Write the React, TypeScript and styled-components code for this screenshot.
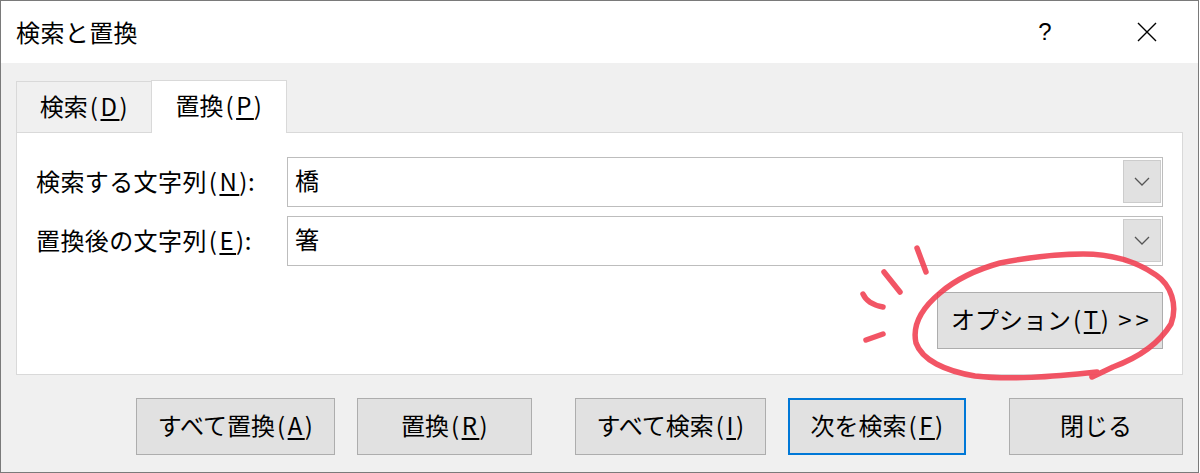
import styled, { createGlobalStyle } from "styled-components";

const GlobalStyle = createGlobalStyle`
  body {
    margin: 0;
    background: #ffffff;
    font-family: "Noto Sans CJK JP", "Noto Sans", sans-serif;
    color: #000;
  }
`;

const Window = styled.div`
  position: relative;
  box-sizing: border-box;
  width: 1199px;
  height: 473px;
  border: 1px solid #7a7a7a;
  display: flex;
  flex-direction: column;
  background: #f0f0f0;
`;

const TitleBar = styled.div`
  height: 62px;
  background: #ffffff;
  display: flex;
  align-items: center;
  padding-left: 15px;
  font-size: 24px;
  line-height: 1;
`;

const TitleText = styled.span`
  flex: 1;
  letter-spacing: 0.4px;
`;

const TitleButton = styled.div`
  width: 102px;
  height: 62px;
  display: flex;
  align-items: center;
  justify-content: center;
  font-family: "Liberation Sans", sans-serif;
  font-size: 24px;
`;

const Body = styled.div`
  flex: 1;
  padding: 17px 15px 0 15px;
`;

const TabStrip = styled.div`
  display: flex;
  align-items: flex-end;
  height: 52px;
`;

const Tab = styled.div<{ $active?: boolean }>`
  box-sizing: border-box;
  width: ${(p) => (p.$active ? 136 : 135)}px;
  height: ${(p) => (p.$active ? 53 : 51)}px;
  margin-bottom: ${(p) => (p.$active ? -1 : 0)}px;
  position: relative;
  z-index: ${(p) => (p.$active ? 2 : 1)};
  background: ${(p) => (p.$active ? "#ffffff" : "#f0f0f0")};
  border: 1px solid #d9d9d9;
  border-bottom: none;
  border-right: ${(p) => (p.$active ? "1px solid #d9d9d9" : "none")};
  display: flex;
  align-items: center;
  justify-content: center;
  padding-bottom: ${(p) => (p.$active ? 4 : 2)}px;
  font-size: 24px;
  line-height: 1;
`;

const Panel = styled.div`
  box-sizing: border-box;
  height: 243px;
  background: #ffffff;
  border: 1px solid #d9d9d9;
  padding: 24px 19px 0 19px;
  display: flex;
  flex-direction: column;
`;

const FieldGrid = styled.div`
  display: grid;
  grid-template-columns: 251px 1fr;
  row-gap: 9px;
  align-items: center;
`;

const Label = styled.label`
  font-size: 24px;
  line-height: 1;
  letter-spacing: 0.4px;
  padding-bottom: 2px;
`;

const Combo = styled.div`
  box-sizing: border-box;
  height: 50px;
  border: 1px solid #bdbdbd;
  background: #ffffff;
  display: flex;
  align-items: center;
  padding: 2px 1px 3px 7px;
`;

const ComboValue = styled.span`
  flex: 1;
  font-size: 24px;
  line-height: 1;
  padding-bottom: 4px;
`;

const DropButton = styled.div`
  box-sizing: border-box;
  width: 38px;
  height: 100%;
  background: #e1e1e1;
  border: 1px solid #cccccc;
  display: flex;
  align-items: center;
  justify-content: center;
`;

const OptionsRow = styled.div`
  display: flex;
  justify-content: flex-end;
  margin-top: 26px;
`;

const Button = styled.button<{ $w: number; $focused?: boolean }>`
  box-sizing: border-box;
  width: ${(p) => p.$w}px;
  height: 57px;
  background: #e1e1e1;
  border: ${(p) => (p.$focused ? "2px solid #0078d7" : "1px solid #adadad")};
  font-family: "Noto Sans CJK JP", "Noto Sans", sans-serif;
  font-size: 24px;
  line-height: 1;
  color: #000;
  padding: 0 0 3px 0;
  margin: 0;
  display: flex;
  align-items: center;
  justify-content: center;
`;

const Footer = styled.div`
  display: flex;
  justify-content: flex-end;
  gap: 43px;
  padding-top: 23px;
`;

const ButtonGroup = styled.div`
  display: flex;
  gap: 22px;
`;

/* the mnemonic "(X)" part: wider latin spacing, like Yu Gothic UI */
const Key = styled.span`
  letter-spacing: 2.5px;
  margin-left: 2px;
  margin-right: -2px;
`;

const U = styled.u`
  text-decoration-thickness: 1.5px;
  text-underline-offset: 3px;
`;

const Arrows = styled.span`
  letter-spacing: 4px;
  margin-left: 9px;
  margin-right: -4px;
`;

const Annotation = styled.svg`
  position: absolute;
  left: -1px;
  top: -1px;
  width: 1200px;
  height: 473px;
  pointer-events: none;
  z-index: 5;
`;

const Chevron = () => (
  <svg width="16" height="9" viewBox="0 0 16 9">
    <polyline points="1,1 8,8 15,1" fill="none" stroke="#555" strokeWidth="1.3" />
  </svg>
);

const CloseIcon = () => (
  <svg width="20" height="20" viewBox="0 0 20 20">
    <path d="M1 1 L19 19 M19 1 L1 19" stroke="#000" strokeWidth="1.4" fill="none" />
  </svg>
);

const Mn = ({ k }: { k: string }) => (
  <Key>
    (<U>{k}</U>)
  </Key>
);

export default function App() {
  return (
    <>
      <GlobalStyle />
      <Window>
        <TitleBar>
          <TitleText>検索と置換</TitleText>
          <TitleButton>?</TitleButton>
          <TitleButton>
            <CloseIcon />
          </TitleButton>
        </TitleBar>
        <Body>
          <TabStrip>
            <Tab>
              検索<Mn k="D" />
            </Tab>
            <Tab $active>
              置換<Mn k="P" />
            </Tab>
          </TabStrip>
          <Panel>
            <FieldGrid>
              <Label>
                検索する文字列<Mn k="N" />:
              </Label>
              <Combo>
                <ComboValue>橋</ComboValue>
                <DropButton>
                  <Chevron />
                </DropButton>
              </Combo>
              <Label>
                置換後の文字列<Mn k="E" />:
              </Label>
              <Combo>
                <ComboValue>箸</ComboValue>
                <DropButton>
                  <Chevron />
                </DropButton>
              </Combo>
            </FieldGrid>
            <OptionsRow>
              <Button $w={226}>
                オプション<Mn k="T" />
                <Arrows>&gt;&gt;</Arrows>
              </Button>
            </OptionsRow>
          </Panel>
          <Footer>
            <ButtonGroup>
              <Button $w={199}>
                すべて置換<Mn k="A" />
              </Button>
              <Button $w={175}>
                置換<Mn k="R" />
              </Button>
            </ButtonGroup>
            <ButtonGroup>
              <Button $w={191}>
                すべて検索<Mn k="I" />
              </Button>
              <Button $w={178} $focused>
                次を検索<Mn k="F" />
              </Button>
            </ButtonGroup>
            <Button $w={174}>閉じる</Button>
          </Footer>
        </Body>
        <Annotation viewBox="0 0 1200 473">
          <g
            fill="none"
            stroke="#f03e50"
            strokeOpacity="0.88"
            strokeWidth="5.5"
            strokeLinecap="round"
            strokeLinejoin="round"
          >
            <path d="M1092 377 L1113 367 C1140 357 1160 342 1171 324 C1178 305 1171 285 1156 275 C1136 261 1110 254 1083 254 C1055 254 1030 257 1000 263 C975 270 955 280 940 293 C922 308 912 325 916 343 C922 360 945 371 975 376 C1010 380 1050 377 1097 372" />
            <path d="M917 248 L926 272" />
            <path d="M884 272 L900 292" />
            <path d="M863 294 C866 301 872 305 883 307" />
            <path d="M866 340 L883 334" />
          </g>
        </Annotation>
      </Window>
    </>
  );
}
